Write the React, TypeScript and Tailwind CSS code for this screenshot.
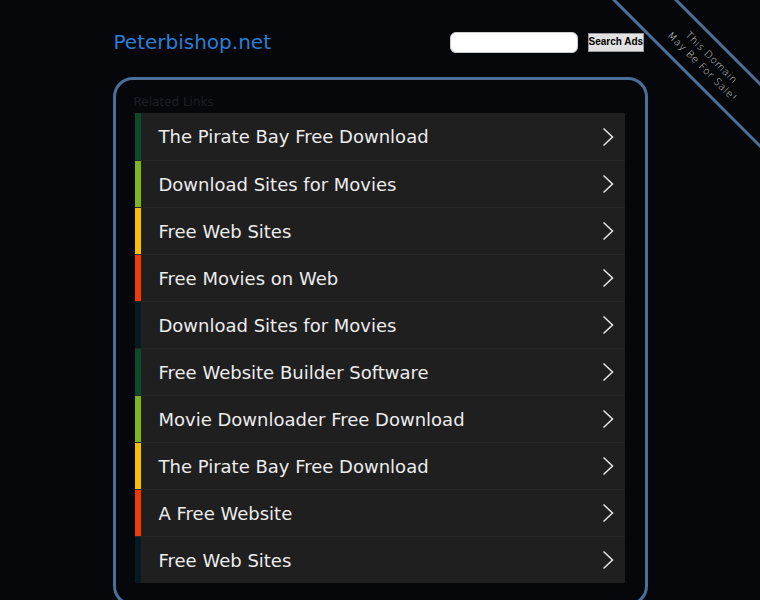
import React from "react";

const rows: { label: string; color: string }[] = [
  { label: "The Pirate Bay Free Download", color: "bg-[#0d4a2c]" },
  { label: "Download Sites for Movies", color: "bg-[#7cb518]" },
  { label: "Free Web Sites", color: "bg-[#f6c000]" },
  { label: "Free Movies on Web", color: "bg-[#f03a00]" },
  { label: "Download Sites for Movies", color: "bg-[#061a22]" },
  { label: "Free Website Builder Software", color: "bg-[#0d4a2c]" },
  { label: "Movie Downloader Free Download", color: "bg-[#7cb518]" },
  { label: "The Pirate Bay Free Download", color: "bg-[#f6c000]" },
  { label: "A Free Website", color: "bg-[#f03a00]" },
  { label: "Free Web Sites", color: "bg-[#061a22]" },
];

function Chevron() {
  return (
    <svg width="12" height="20" viewBox="0 0 12 20" className="shrink-0">
      <path d="M1.5 1.5 L10.5 10 L1.5 18.5" fill="none" stroke="#e0e0e0" strokeWidth="1.6" />
    </svg>
  );
}

export default function App() {
  return (
    <div className="relative min-h-[600px] w-full overflow-hidden bg-[#05070b] font-['DejaVu_Sans',sans-serif]">
      {/* ribbon lines */}
      <svg className="pointer-events-none absolute left-[600px] top-0" width="160" height="160" viewBox="0 0 160 160">
        <line x1="13" y1="-1" x2="161" y2="147" stroke="#4a7099" strokeWidth="3" />
        <line x1="75" y1="-1" x2="161" y2="85" stroke="#4a7099" strokeWidth="3" />
      </svg>
      {/* ribbon text */}
      <div className="pointer-events-none absolute left-[607px] top-[40px] flex h-[44px] w-[200px] rotate-45 flex-col items-center justify-center text-[10px] font-light leading-[13px] tracking-[0.6px] text-[#d4d4d4]">
        <span>This Domain</span>
        <span>May Be For Sale!</span>
      </div>

      <div className="mx-auto w-[535px] pt-[28px]">
        <div className="flex h-[28px] items-center justify-between pl-[1px] pr-[4px]">
          <div className="text-[20px] leading-none text-[#2a7fd4]">Peterbishop.net</div>
          <div className="flex items-center gap-[10px]">
            <div className="h-[21px] w-[128px] rounded-[6px] border border-[#ccc] bg-white" />
            <button className="h-[19px] w-[56px] whitespace-nowrap border border-[#999] bg-[#e2e2e2] px-0 font-['Liberation_Sans',sans-serif] text-[10px] font-bold leading-none text-black">
              Search Ads
            </button>
          </div>
        </div>

        <div className="mt-[21px] rounded-[20px] border-[3px] border-[#4a7099] pb-[20px] pl-[17px] pr-[20px] pt-[15px]">
          <div className="pl-[1px] text-[12px] leading-[14px] text-[#1c1f24]">Related Links</div>
          <div className="ml-[2px] mt-[4px] flex flex-col">
            {rows.map((r, i) => (
              <div
                key={i}
                className={`flex h-[47px] items-stretch bg-[#1f1f1f] ${i > 0 ? "border-t border-[#272727]" : ""}`}
              >
                <div className={`w-[6px] shrink-0 ${r.color}`} />
                <div className="flex flex-1 items-center justify-between pl-[18px] pr-[11px]">
                  <span className="pt-[1px] text-[18px] leading-none text-[#ececec]">{r.label}</span>
                  <Chevron />
                </div>
              </div>
            ))}
          </div>
        </div>
      </div>
    </div>
  );
}
